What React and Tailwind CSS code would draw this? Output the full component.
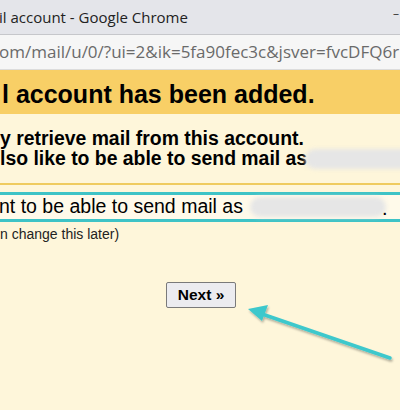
import React from 'react'

const arial = { fontFamily: '"Liberation Sans", Arial, sans-serif' }

export default function App() {
  return (
    <div className="relative w-[400px] h-[410px] overflow-hidden bg-[#fef6da]" style={arial}>
      {/* Window title bar */}
      <div
        className="h-[35px] flex items-center justify-between bg-[#e4e5ea] border-b border-[#c6c7cb] text-[15px] text-[#222]"
        style={{ fontFamily: '"Open Sans", "Noto Sans", sans-serif' }}
      >
        <span className="-ml-[1px] whitespace-nowrap">il account - Google Chrome</span>
        <span className="text-[12px] text-[#444] mr-[1px] -mt-[6px]">–</span>
      </div>

      {/* Address bar */}
      <div
        className="h-[35px] flex items-center bg-[#f6f6f6] border-b border-[#dcdcdc] text-[17px] text-[#6a6a6a] whitespace-nowrap overflow-hidden"
        style={{ fontFamily: '"Open Sans", "Noto Sans", sans-serif' }}
      >
        <span className="-ml-[1px]">om/mail/u/0/?ui=2&amp;ik=5fa90fec3c&amp;jsver=fvcDFQ6r</span>
      </div>

      {/* Heading band */}
      <div className="h-[44px] flex items-center bg-[#f8cf66] pt-[6px]">
        <h1 className="text-[25px] font-bold text-black whitespace-nowrap pl-[2px]">l account has been added.</h1>
      </div>

      {/* Body */}
      <div className="pt-[14px] text-[19.4px] font-bold leading-[20px] text-black whitespace-nowrap">
        <p>y retrieve mail from this account.</p>
        <p className="relative">
          lso like to be able to send mail as
          <span className="absolute left-[305px] top-[1px] w-[110px] h-[20px] rounded-full bg-[#e6e6e6] blur-[2px]" />
        </p>
      </div>

      <div className="mt-[15px] h-[2px] bg-[#efcb5f]" />

      <div className="mt-[7px] relative h-[30px] border-y-[3px] border-[#3ec3c6] bg-[#fffaea] flex items-center text-[19.5px] text-black whitespace-nowrap">
        <span className="-ml-[1px]">nt to be able to send mail as</span>
        <span className="absolute left-[250px] top-[2px] w-[136px] h-[20px] rounded-full bg-[#e6e6e6] blur-[2px]" />
        <span className="absolute left-[382px] top-[-2px] text-[20px]">.</span>
      </div>

      <p className="mt-[3px] text-[14px] leading-[18px] text-[#222] whitespace-nowrap">n change this later)</p>

      <div className="mt-[39px] flex pl-[166px]">
        <button className="w-[70px] h-[26px] rounded-[2px] border border-[#7a7a7a] bg-[#ececf0] text-[15.5px] font-bold text-black" style={arial}>
          Next »
        </button>
      </div>

      {/* Annotation arrow */}
      <svg className="absolute left-0 top-0" width="400" height="410" viewBox="0 0 400 410">
        <defs>
          <filter id="sh" x="-20%" y="-20%" width="140%" height="140%">
            <feDropShadow dx="1" dy="2" stdDeviation="1.2" floodColor="#000" floodOpacity="0.3" />
          </filter>
        </defs>
        <g filter="url(#sh)">
          <line x1="390" y1="358" x2="262" y2="314" stroke="#3ec8cc" strokeWidth="3.5" strokeLinecap="round" />
          <polygon points="248,309 268,305 262,321" fill="#3ec8cc" />
        </g>
      </svg>
    </div>
  )
}
